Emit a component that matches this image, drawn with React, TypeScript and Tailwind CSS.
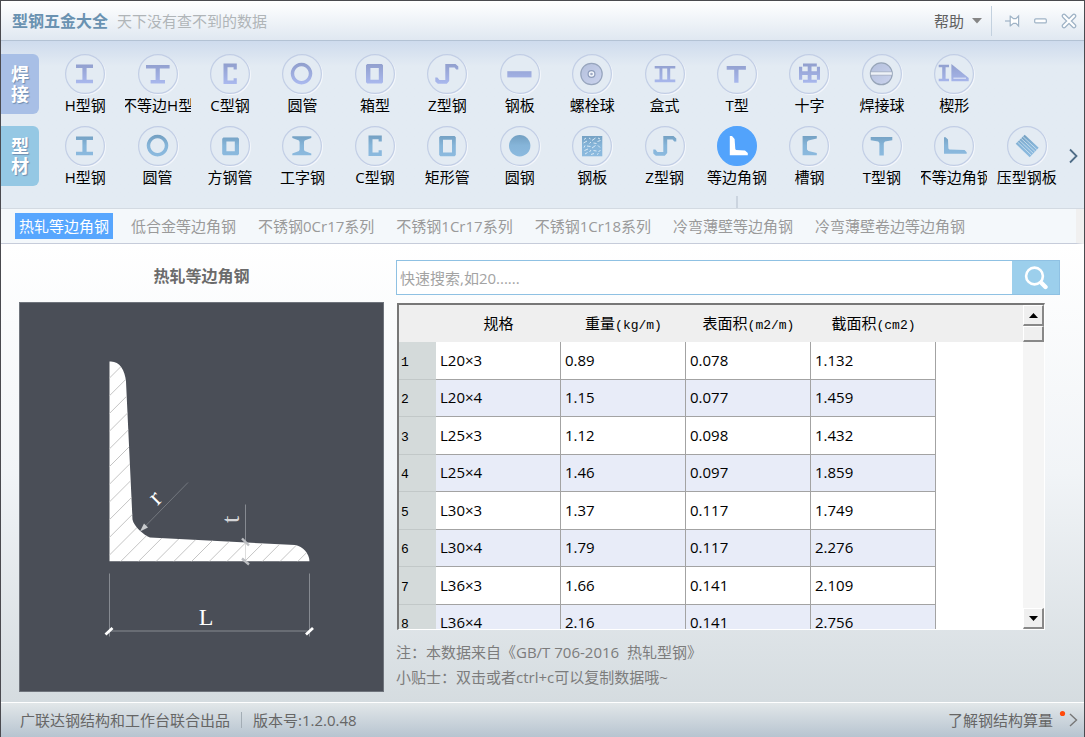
import React, { useState } from "react";

type Item = { label: string; icon: React.ReactNode };

const Z_PATH =
  "M18.3 10 H28.5 L31.3 12.6 V15.4 H29.2 L27.6 13.6 H22.2 V27 L19.8 29.7 H10.8 L8.3 27.4 V23.4 H10.4 L12.4 26 H18.3 Z";
const C_PATH = "M13.5 9.5 H26.8 V15.4 H23.6 V13.2 H17.5 V26.4 H23.6 V24.2 H26.8 V30 H13.5 Z";
const H_PATH = "M11 10.5 H28 V14 H21.6 V25.8 H28 V29.3 H11 V25.8 H17.4 V14 H11 Z";

const welded: Item[] = [
  { label: "H型钢", icon: <path d={H_PATH} /> },
  {
    label: "不等边H型",
    icon: <path d="M8 11 H31.6 V14.6 H21.8 V26 H27 V29.5 H12.6 V26 H17.6 V14.6 H8 Z" />,
  },
  { label: "C型钢", icon: <path d={C_PATH} /> },
  {
    label: "圆管",
    icon: <path fillRule="evenodd" d="M19.5 8.8 a10.8 10.8 0 1 0 .01 0 Z M19.5 12.3 a7.3 7.3 0 1 1 -.01 0 Z" />,
  },
  {
    label: "箱型",
    icon: (
      <path
        fillRule="evenodd"
        d="M12.2 10 H26.8 L28 11.2 V28.3 L26.8 29.5 H12.2 L11 28.3 V11.2 Z M15.4 14 V25.8 H23.8 V14 Z"
      />
    ),
  },
  { label: "Z型钢", icon: <path d={Z_PATH} /> },
  { label: "钢板", icon: <rect x="7.3" y="17.2" width="24.2" height="6.2" /> },
  {
    label: "螺栓球",
    icon: (
      <>
        <circle cx="19.5" cy="20" r="10.7" stroke="#97a5bd" strokeWidth="1.2" fill="url(#ball)" />
        <circle cx="19.5" cy="20" r="3.4" stroke="#8d9cba" strokeWidth="1.2" fill="#f3f6fb" />
        <circle cx="19.5" cy="20" r="1.3" fill="#a0abc6" />
      </>
    ),
  },
  {
    label: "盒式",
    icon: (
      <path
        fillRule="evenodd"
        d="M9.7 12 H30.3 V14.6 H25.2 V25.5 H30.3 V28.2 H9.7 V25.5 H14.5 V14.6 H9.7 Z M17.4 14.6 V25.5 H22.2 V14.6 Z"
      />
    ),
  },
  { label: "T型", icon: <path d="M9.7 12 H28.9 V15.8 H21.5 V28.8 H17.2 V15.8 H9.7 Z" /> },
  {
    label: "十字",
    icon: (
      <path d="M14 9.5 H27.8 V12.4 H22.5 V17.3 H27.9 V12.8 H31 V25.8 H27.9 V21 H22.5 V25.8 H27.8 V28.8 H14 V25.8 H18.7 V21 H13.2 V25.8 H10 V12.8 H13.2 V17.3 H18.7 V12.4 H14 Z" />
    ),
  },
  {
    label: "焊接球",
    icon: (
      <>
        <circle cx="19.3" cy="19.8" r="10.9" stroke="#97a5b8" strokeWidth="1.2" fill="url(#ball)" />
        <rect x="8.8" y="18" width="21" height="3" fill="#eef2f8" />
        <path d="M8.4 17.8 H30.2 M8.4 21.2 H30.2" stroke="#a6b0c2" strokeWidth="0.8" />
      </>
    ),
  },
  {
    label: "楔形",
    icon: (
      <>
        <path d="M4.7 10.8 H15 V13.2 H11.6 V24.8 H15 V27.2 H4.7 V24.8 H8.2 V13.2 H4.7 Z" />
        <path d="M17.4 10 L34.7 24 V27.2 H17.4 Z" />
        <path d="M19.4 24.2 H32" stroke="#e8edf9" strokeWidth="1" />
      </>
    ),
  },
];

const profiles: Item[] = [
  { label: "H型钢", icon: <path d={H_PATH} /> },
  {
    label: "圆管",
    icon: <path fillRule="evenodd" d="M19.5 8.8 a10.8 10.8 0 1 0 .01 0 Z M19.5 12.3 a7.3 7.3 0 1 1 -.01 0 Z" />,
  },
  {
    label: "方钢管",
    icon: (
      <path
        fillRule="evenodd"
        d="M13.4 11.6 H27.8 L29 12.8 V28 L27.8 29.2 H13.4 L12.2 28 V12.8 Z M16.4 15.6 V25.2 H24.8 V15.6 Z"
      />
    ),
  },
  {
    label: "工字钢",
    icon: (
      <path d="M10.3 10.2 H29.3 V12 L22.6 14.4 L22 16 V23.6 L22.6 25 L29.3 27.4 V29.2 H10.3 V27.4 L17 25 L17.6 23.6 V16 L17 14.4 L10.3 12 Z" />
    ),
  },
  { label: "C型钢", icon: <path d={C_PATH} /> },
  {
    label: "矩形管",
    icon: (
      <path
        fillRule="evenodd"
        d="M13.4 10 H27.6 L28.8 11.2 V29 L27.6 30.2 H13.4 L12.2 29 V11.2 Z M16 13.8 V26.4 H25 V13.8 Z"
      />
    ),
  },
  { label: "圆钢", icon: <circle cx="19.7" cy="19.8" r="10.7" /> },
  {
    label: "钢板",
    icon: (
      <>
        <rect x="10" y="10" width="20.3" height="20.3" />
        <path
          d="M12 13.5 l2 -1.5 M17 12 l1.5 1 M20 14.5 l3.5 -2.5 M26 12 l2 1 M11.5 17 l3.5 -2 M17.5 17.5 l1.5 -1.5 M21.5 17 l3 .5 M25.5 15.5 l3 -1 M12 21.5 l1 -2 M15 20 l3.5 .5 M20 22 l3.5 -2.5 M26 19.5 l2 2 M12.5 24.5 l3.5 -1.5 M17.5 26 l1.5 -2 M21.5 24.5 l3 .5 M26.5 26 l2 -2 M13 28 l2.5 -1.5 M19 28.5 l3 -1 M25 28.5 l1.5 -1"
          stroke="#e3eff8"
          strokeWidth="0.9"
        />
      </>
    ),
  },
  { label: "Z型钢", icon: <path d={Z_PATH} /> },
  {
    label: "等边角钢",
    icon: <path d="M12.8 10 H15 L17.6 13 L18.3 23 L19 24 L28 24.6 L30.8 27 V29.2 H12.8 Z" />,
  },
  {
    label: "槽钢",
    icon: <path d="M13.6 10 H27.8 V12.4 L19.4 14.4 L18 16 V23.6 L19.4 25 L27.8 27 V29.2 H13.6 Z" />,
  },
  {
    label: "T型钢",
    icon: <path d="M8.7 11 H30.3 V14.2 L23 15.4 L21.8 17 V29.4 H17.4 V17 L16.2 15.4 L8.7 14.2 Z" />,
  },
  {
    label: "不等边角钢",
    icon: <path d="M10 11.3 H11.6 L14 13.6 L14.4 22.4 L15.4 23.4 L30.6 24 L32.7 26.2 V27.8 H10 Z" />,
  },
  {
    label: "压型钢板",
    icon: (
      <>
        <path d="M17.7 8.7 L31.7 21.7 L22.7 31.3 L8.7 17.7 Z" />
        <path
          d="M15.9 10.6 L29.9 23.6 M14.1 12.4 L28.1 25.5 M12.3 14.2 L26.3 27.4 M10.5 16 L24.5 29.3"
          stroke="#d3e4f1"
          strokeWidth="0.8"
        />
      </>
    ),
  },
];

const subTypes = [
  "热轧等边角钢",
  "低合金等边角钢",
  "不锈钢0Cr17系列",
  "不锈钢1Cr17系列",
  "不锈钢1Cr18系列",
  "冷弯薄壁等边角钢",
  "冷弯薄壁卷边等边角钢",
];

const columns = [
  { name: "规格", unit: "" },
  { name: "重量", unit: "(kg/m)" },
  { name: "表面积", unit: "(m2/m)" },
  { name: "截面积", unit: "(cm2)" },
];

const rows = [
  ["L20×3", "0.89", "0.078", "1.132"],
  ["L20×4", "1.15", "0.077", "1.459"],
  ["L25×3", "1.12", "0.098", "1.432"],
  ["L25×4", "1.46", "0.097", "1.859"],
  ["L30×3", "1.37", "0.117", "1.749"],
  ["L30×4", "1.79", "0.117", "2.276"],
  ["L36×3", "1.66", "0.141", "2.109"],
  ["L36×4", "2.16", "0.141", "2.756"],
];

const hatch = Array.from({ length: 23 }, (_, i) => 76 + i * 17.7);

function IconDefs() {
  return (
    <svg className="absolute h-0 w-0" aria-hidden="true">
      <defs>
        <linearGradient id="violet" x1="0" y1="8" x2="0" y2="31" gradientUnits="userSpaceOnUse">
          <stop offset="0" stopColor="#8f9dcb" />
          <stop offset="1" stopColor="#abbaf0" />
        </linearGradient>
        <linearGradient id="blue" x1="0" y1="8" x2="0" y2="31" gradientUnits="userSpaceOnUse">
          <stop offset="0" stopColor="#719dbf" />
          <stop offset="0.5" stopColor="#86b5d9" />
          <stop offset="1" stopColor="#8cbadf" />
        </linearGradient>
        <linearGradient id="ball" x1="0" y1="0" x2="1" y2="1">
          <stop offset="0" stopColor="#b4c0dc" />
          <stop offset="1" stopColor="#cbd3ee" />
        </linearGradient>
      </defs>
    </svg>
  );
}

function ProfileRow(props: {
  title: string;
  tabClass: string;
  fill: string;
  items: Item[];
  selected?: string;
  onSelect: (label: string) => void;
}) {
  const { title, tabClass, fill, items, selected, onSelect } = props;
  return (
    <div className="flex items-start">
      <button
        className={`flex h-15 w-[38px] shrink-0 flex-col items-center justify-center rounded-r-md text-lg leading-5 font-bold text-white text-shadow-[1px_1px_1px_#6f8db0] ${tabClass}`}
      >
        {title.split("").map((c) => (
          <span key={c}>{c}</span>
        ))}
      </button>
      <div className="ml-[10px] grid flex-1 grid-cols-14">
        {items.map((item) => {
          const on = item.label === selected;
          return (
            <button key={item.label} className="flex flex-col items-center" onClick={() => onSelect(item.label)}>
              <svg
                viewBox="0 0 40 40"
                className={on ? "size-10" : "size-10 drop-shadow-[1px_1px_0_#f3f6fb]"}
                fill={on ? "#ffffff" : fill}
                aria-hidden="true"
              >
                <circle
                  cx="20"
                  cy="20"
                  r="19.4"
                  fill={on ? "#52a3fc" : "#e3ebf3"}
                  stroke={on ? "#52a3fc" : "#c2cee5"}
                  strokeWidth="1.2"
                />
                {item.icon}
              </svg>
              <span className="flex w-[66px] justify-center overflow-hidden leading-[22px] whitespace-nowrap text-black">
                <span className="shrink-0">{item.label}</span>
              </span>
            </button>
          );
        })}
      </div>
    </div>
  );
}

function AngleDrawing() {
  return (
    <svg viewBox="0 0 365 389" className="h-full w-full" role="img" aria-label="热轧等边角钢">
      <defs>
        <clipPath id="section">
          <path d="M90.5 59 C100 58 106 67 107 79 L113.5 217 C115 224 124 232 131 235 L276 242.5 C284 244 290.5 251 290.5 259 H90.5 Z" />
        </clipPath>
      </defs>
      <g clipPath="url(#section)">
        <rect x="85" y="55" width="210" height="210" fill="#ffffff" />
        {hatch.map((y) => (
          <path key={y} d={`M90 ${y} L310 ${y - 220}`} stroke="#c4c4c4" strokeWidth="1" />
        ))}
      </g>
      <g stroke="#868a91" strokeWidth="1" fill="none">
        <path d="M90.5 271 V334 M290.5 271 V334 M90.5 328.5 H290.5" />
        <path d="M226.5 202 V240" />
        <path d="M169 180 L124 226" stroke="#74787f" />
      </g>
      <path d="M226.5 240 V258" stroke="#dddddd" />
      <path d="M121 229 L125 221 L129 225 Z" fill="#c9cbce" />
      <path d="M223 236 L230 243 M223 256 L230 262" stroke="#bcbec2" strokeWidth="2.4" />
      <path d="M86.5 332 L93.5 325.5 M287 332 L294 325.5" stroke="#ffffff" strokeWidth="2.8" />
      <g fill="#ffffff" textAnchor="middle" className="font-['Liberation_Serif',serif]">
        <text x="187" y="322" fontSize="24">
          L
        </text>
        <text x="0" y="5" fontSize="25" transform="translate(138 197) rotate(-45)">
          r
        </text>
        <text x="0" y="7" fontSize="26" fill="#d5d6d8" transform="translate(213 217) rotate(-90)">
          t
        </text>
      </g>
    </svg>
  );
}

export default function App() {
  const [selected, setSelected] = useState("等边角钢");
  const [sub, setSub] = useState(subTypes[0]);
  const bevel = "border-t border-l border-r-2 border-b-2 border-t-white border-l-white border-r-[#888] border-b-[#888] bg-[#efefef]";

  return (
    <div className="flex h-screen flex-col border-x border-t border-[#4a4a4f] bg-white font-['Open_Sans','Noto_Sans_CJK_SC',sans-serif] text-[15px] leading-5">
      <IconDefs />
      <header className="flex h-10 shrink-0 items-center border-b border-[#b3c2d4] bg-linear-to-b from-white to-[#e0e8f1] pr-[7px] pl-[11px]">
        <h1 className="text-base font-bold text-[#6a92b1]">型钢五金大全</h1>
        <span className="ml-[9px] text-[#b0b5b8]">天下没有查不到的数据</span>
        <button className="ml-auto flex items-center gap-2 text-[#606060]">
          帮助
          <svg viewBox="0 0 10 6" className="h-[6px] w-[10px]" aria-hidden="true">
            <path d="M0 0 H10 L5 5.6 Z" fill="#858585" />
          </svg>
        </button>
        <span className="ml-[9px] h-[30px] w-px bg-[#c3d1df]" />
        <div className="ml-[13px] flex items-center gap-[14px]">
          <button aria-label="置顶">
            <svg viewBox="0 0 15 16" className="h-4 w-[15px]" fill="#ffffff" stroke="#9fb3c6" strokeWidth="1.2" aria-hidden="true">
              <path d="M0 8 H5" />
              <path d="M5.2 2.5 V13.5 M5.2 3 L8.5 5.6 H11 L13.6 3 V13 L11 10.4 H8.5 L5.2 13" />
            </svg>
          </button>
          <button aria-label="最小化">
            <svg viewBox="0 0 13 6" className="h-[6px] w-[13px]" aria-hidden="true">
              <rect x="0.7" y="0.9" width="11.6" height="4" rx="1" fill="#ffffff" stroke="#9fb3c6" strokeWidth="1.2" />
            </svg>
          </button>
          <button aria-label="关闭">
            <svg viewBox="0 0 16 16" className="size-4" aria-hidden="true">
              <path d="M3 3 L13 13 M13 3 L3 13" stroke="#9fb3c6" strokeWidth="4.6" strokeLinecap="round" />
              <path d="M3 3 L13 13 M13 3 L3 13" stroke="#ffffff" strokeWidth="2.2" strokeLinecap="round" />
            </svg>
          </button>
        </div>
      </header>

      <nav className="flex shrink-0 border-b border-[#d3dae2] bg-[#e3ebf3] bg-linear-to-b from-[#cedbed] via-[#e3ebf3] via-15% to-[#e3ebf3] pt-[13px]">
        <div className="flex flex-1 flex-col gap-[10px]">
          <ProfileRow title="焊接" tabClass="bg-[#a8bfe6]" fill="url(#violet)" items={welded} onSelect={setSelected} />
          <ProfileRow
            title="型材"
            tabClass="bg-[#95c8e4]"
            fill="url(#blue)"
            items={profiles}
            selected={selected}
            onSelect={setSelected}
          />
          <div className="-mt-[2px] ml-[47px] grid grid-cols-14">
            <span className="col-start-10 h-3 w-0.5 justify-self-center bg-[#cbd4df]" />
          </div>
        </div>
        <button className="flex w-[21px] items-end justify-center pb-11" aria-label="更多">
          <svg viewBox="0 0 9 16" className="h-4 w-[9px]" fill="none" stroke="#4f6d87" strokeWidth="1.8" aria-hidden="true">
            <path d="M1 1.5 L7.5 8 L1 14.5" />
          </svg>
        </button>
      </nav>

      <div className="flex h-[35px] shrink-0 items-center gap-[14px] border-r-8 border-b border-r-[#f0f0f0] border-b-[#c6ccda] bg-[#f4f8fb] pl-[14px]">
        {subTypes.map((s) => (
          <button
            key={s}
            onClick={() => setSub(s)}
            className={
              s === sub
                ? "h-[26px] bg-[#57a6fe] px-1 whitespace-nowrap text-white"
                : "h-[26px] px-1 whitespace-nowrap text-[#9a9a9a]"
            }
          >
            {s}
          </button>
        ))}
      </div>

      <main className="flex min-h-0 flex-1 gap-3 bg-linear-to-b from-white via-[#f1f4f7] to-[#d5dce0] pr-6 pl-[18px]">
        <section className="flex w-[365px] shrink-0 flex-col pt-[22px] pb-[10px]">
          <h2 className="text-center text-base leading-5 font-bold text-[#6b6b6b]">热轧等边角钢</h2>
          <div className="mt-4 min-h-0 flex-1 bg-[#4a4e57] outline -outline-offset-1 outline-[#6f747c]">
            <AngleDrawing />
          </div>
        </section>

        <section className="flex min-w-0 flex-1 flex-col pt-4 pb-3">
          <form className="flex h-[35px] shrink-0 border border-[#8fc1e3]" onSubmit={(e) => e.preventDefault()}>
            <input
              aria-label="快速搜索"
              placeholder="快速搜索,如20......"
              className="min-w-0 flex-1 bg-white px-[3px] outline-none placeholder:text-[#a3a3a3]"
            />
            <button className="flex w-[47px] items-center justify-center bg-[#9ccfec]" aria-label="搜索">
              <svg viewBox="0 0 24 24" className="size-6" fill="none" stroke="#ffffff" strokeLinecap="round" aria-hidden="true">
                <circle cx="10.5" cy="10" r="8.4" strokeWidth="2.6" />
                <path d="M17.5 17 L21.5 21" strokeWidth="4.4" />
              </svg>
            </button>
          </form>

          <div className="mt-2 mr-[15px] ml-px flex min-h-0 flex-1 border-t-2 border-r border-b border-l-2 border-t-[#777] border-r-white border-b-white border-l-[#777] bg-white">
            <div className="min-w-0 flex-1 overflow-hidden">
              <table className="w-full table-fixed border-separate border-spacing-0 text-black">
                <colgroup>
                  <col className="w-[37px]" />
                  <col className="w-[125px]" />
                  <col className="w-[125px]" />
                  <col className="w-[125px]" />
                  <col className="w-[125px]" />
                  <col />
                </colgroup>
                <thead>
                  <tr className="h-[37px] bg-[#efefef]">
                    <td />
                    {columns.map((c) => (
                      <th key={c.name} scope="col" className="p-0 pt-0.5 font-normal whitespace-nowrap">
                        {c.name}
                        <span className="font-['Liberation_Mono',monospace] text-[13px]">{c.unit}</span>
                      </th>
                    ))}
                    <td />
                  </tr>
                </thead>
                <tbody>
                  {rows.map((r, i) => (
                    <tr key={r[0]} className="h-[38px] bg-white even:h-[37px] even:bg-[#e8ecf8]">
                      <th
                        scope="row"
                        className="border-b border-[#c2c8c8] bg-[#d4dada] p-0 pt-1 pl-0.5 text-left font-['Liberation_Mono',monospace] text-[13px] font-normal"
                      >
                        {i + 1}
                      </th>
                      {r.map((v, j) => (
                        <td key={j} className="border-r border-b border-[#a3a3a3] p-0 pb-0.5 pl-1">
                          {v}
                        </td>
                      ))}
                      <td className="bg-white" />
                    </tr>
                  ))}
                </tbody>
              </table>
            </div>
            <div className="flex w-[21px] shrink-0 flex-col bg-[#f5f5f5]">
              <button className={`flex h-[21px] items-center justify-center ${bevel}`} aria-label="向上滚动">
                <svg viewBox="0 0 9 5" className="h-[5px] w-[9px]" aria-hidden="true">
                  <path d="M0 5 L4.5 0 L9 5 Z" />
                </svg>
              </button>
              <div className={`h-4 ${bevel}`} />
              <button className={`mt-auto flex h-[21px] items-center justify-center ${bevel}`} aria-label="向下滚动">
                <svg viewBox="0 0 9 5" className="h-[5px] w-[9px]" aria-hidden="true">
                  <path d="M0 0 L4.5 5 L9 0 Z" />
                </svg>
              </button>
            </div>
          </div>

          <div className="mt-[10px] shrink-0 leading-[25px] text-[#7c7c7c]">
            <p className="whitespace-pre">注：本数据来自《GB/T 706-2016  热轧型钢》</p>
            <p>小贴士：双击或者ctrl+c可以复制数据哦~</p>
          </div>
        </section>
      </main>

      <footer className="flex h-[35px] shrink-0 items-center border-t border-white bg-linear-to-b from-[#e2e7e9] to-[#b7c4d0] pr-[6px] pl-[19px] text-[#666]">
        <span>广联达钢结构和工作台联合出品</span>
        <span className="mx-[11px] h-4 w-px bg-[#a3adb5]" />
        <span>版本号:1.2.0.48</span>
        <a href="#more" className="ml-auto flex items-center">
          了解钢结构算量
          <svg viewBox="0 0 19 20" className="ml-1.5 h-5 w-[19px]" fill="none" aria-hidden="true">
            <circle cx="3.5" cy="3.5" r="2.6" fill="#ff4a0c" />
            <path d="M11 4 L17.5 10 L11 16" stroke="#777777" strokeWidth="1.4" />
          </svg>
        </a>
      </footer>
    </div>
  );
}
